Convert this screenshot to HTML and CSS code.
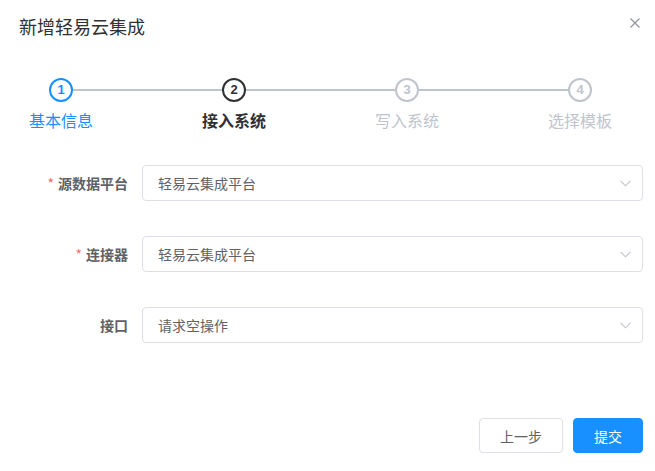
FILE: index.html
```html
<!DOCTYPE html>
<html lang="zh">
<head>
<meta charset="utf-8">
<title>新增轻易云集成</title>
<link rel="stylesheet" href="styles.css">
</head>
<body>
<div class="dialog">
  <div class="header">
    <div class="title">新增轻易云集成</div>
    <svg class="close" width="10" height="10" viewBox="0 0 10 10"><path d="M0.5 0.5L9.5 9.5M9.5 0.5L0.5 9.5" stroke="#909399" stroke-width="1.2" fill="none"/></svg>
  </div>

  <div class="steps">
    <div class="step done">
      <div class="circle">1</div>
      <div class="label">基本信息</div>
    </div>
    <div class="conn"></div>
    <div class="step current">
      <div class="circle">2</div>
      <div class="label">接入系统</div>
    </div>
    <div class="conn"></div>
    <div class="step wait">
      <div class="circle">3</div>
      <div class="label">写入系统</div>
    </div>
    <div class="conn"></div>
    <div class="step wait">
      <div class="circle">4</div>
      <div class="label">选择模板</div>
    </div>
  </div>

  <div class="form">
    <div class="row">
      <div class="flabel"><span class="req">*</span>源数据平台</div>
      <div class="select"><span>轻易云集成平台</span><svg class="arrow" width="11" height="7" viewBox="0 0 11 7"><path d="M0.5 0.8L5.5 5.8L10.5 0.8" stroke="#c0c4cc" stroke-width="1.1" fill="none"/></svg></div>
    </div>
    <div class="row">
      <div class="flabel"><span class="req">*</span>连接器</div>
      <div class="select"><span>轻易云集成平台</span><svg class="arrow" width="11" height="7" viewBox="0 0 11 7"><path d="M0.5 0.8L5.5 5.8L10.5 0.8" stroke="#c0c4cc" stroke-width="1.1" fill="none"/></svg></div>
    </div>
    <div class="row">
      <div class="flabel">接口</div>
      <div class="select"><span>请求空操作</span><svg class="arrow" width="11" height="7" viewBox="0 0 11 7"><path d="M0.5 0.8L5.5 5.8L10.5 0.8" stroke="#c0c4cc" stroke-width="1.1" fill="none"/></svg></div>
    </div>
  </div>

  <div class="footer">
    <button class="btn">上一步</button>
    <button class="btn primary">提交</button>
  </div>
</div>
</body>
</html>
```

FILE: styles.css
```css
* { box-sizing: border-box; }
html, body { margin: 0; padding: 0; background: #fff; }
body {
  font-family: "Noto Sans CJK SC", "Liberation Sans", sans-serif;
  color: #606266;
}
.dialog {
  width: 655px;
  height: 471px;
  display: flex;
  flex-direction: column;
}
.header {
  display: flex;
  justify-content: space-between;
  align-items: flex-start;
  padding: 16px 15px 0 19px;
}
.title {
  font-size: 18px;
  line-height: 20px;
  color: #303133;
}
.close { margin-top: 2px; }

.steps {
  display: flex;
  margin-top: 42px;
  padding: 0 43px 0 29px;
}
.step {
  width: 64px;
  display: flex;
  flex-direction: column;
  align-items: center;
  position: relative;
  z-index: 1;
}
.circle {
  width: 24px;
  height: 24px;
  border: 2px solid #c0c4cc;
  border-radius: 50%;
  background: #fff;
  font-family: "Liberation Sans", sans-serif;
  font-weight: bold;
  font-size: 13px;
  line-height: 20px;
  text-align: center;
  color: #c0c4cc;
}
.label {
  margin-top: 6px;
  font-size: 16px;
  line-height: 24px;
  white-space: nowrap;
  color: #c0c4cc;
}
.step.done .circle { border-color: #1890ff; color: #1890ff; }
.step.done .label { color: #1890ff; }
.step.current .circle { border-color: #303133; color: #303133; }
.step.current .label { color: #303133; font-weight: bold; }
.conn {
  flex: 1;
  height: 2px;
  margin: 11px -20px 0;
  background: #c0c4cc;
}

.form {
  margin-top: 33px;
  padding: 0 12px 0 20px;
  display: flex;
  flex-direction: column;
  gap: 35px;
}
.row {
  display: flex;
  align-items: center;
  height: 36px;
}
.flabel {
  width: 122px;
  padding-right: 14px;
  text-align: right;
  font-size: 14px;
  font-weight: bold;
  color: #606266;
  white-space: nowrap;
}
.req {
  color: #f56c6c;
  font-weight: normal;
  margin-right: 4px;
}
.select {
  flex: 1;
  height: 36px;
  border: 1px solid #dcdfe6;
  border-radius: 4px;
  padding: 0 11px 0 15px;
  display: flex;
  align-items: center;
  justify-content: space-between;
  font-size: 14px;
  color: #606266;
}

.footer {
  margin-top: auto;
  display: flex;
  justify-content: flex-end;
  gap: 10px;
  padding: 0 12px 18px 0;
}
.btn {
  height: 35px;
  width: 84px;
  border: 1px solid #dcdfe6;
  border-radius: 4px;
  background: #fff;
  font-family: "Noto Sans CJK SC", "Liberation Sans", sans-serif;
  font-size: 14px;
  color: #606266;
  padding: 0;
}
.btn.primary {
  width: 70px;
  background: #1890ff;
  border-color: #1890ff;
  color: #fff;
}
```
